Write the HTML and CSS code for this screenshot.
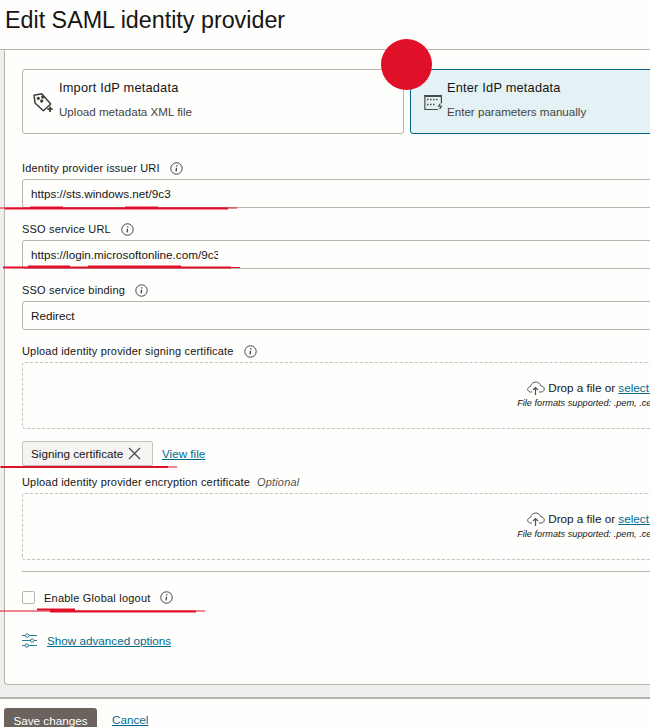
FILE: index.html
```html
<!DOCTYPE html>
<html lang="en">
<head>
<meta charset="utf-8">
<title>Edit SAML identity provider</title>
<link rel="stylesheet" href="styles.css">
</head>
<body>
<div class="page">
  <header class="header"><h1>Edit SAML identity provider</h1></header>
  <main class="main">
    <section class="card">
      <div class="tiles">
        <div class="tile">
          <svg class="tile-icon" width="24" height="24" viewBox="0 0 24 24" fill="none" stroke="#3f3d3a" stroke-width="1.500"><path d="M3 4.200 10.700 2.800 19.700 13 12.300 19.800 4 12Z" stroke-linejoin="round"/><circle cx="7.300" cy="7.300" r=".9"/><circle cx="11.700" cy="6" r=".9"/><circle cx="10.700" cy="10" r=".9"/><path d="M19 15.500v5.500M16.300 18.200h5.400" stroke-width="1.800"/></svg>
          <div><div class="tile-title">Import IdP metadata</div><div class="tile-sub">Upload metadata XML file</div></div>
        </div>
        <div class="tile selected">
          <svg class="tile-icon" width="24" height="24" viewBox="0 0 24 24" fill="none" stroke="#4a4845" stroke-width="1.200"><path d="M22.400 12V4.700H5.900v13.800h13"/><path d="M5.500 5h17.300" stroke-width="2"/><path d="M8 8.500h12M8 13.500h9" stroke-dasharray="1.500 1.500" stroke-width="1.400"/><path d="m21.500 12.500-2 2.800h3l-2 2.800" stroke-width="1.100"/></svg>
          <div><div class="tile-title">Enter IdP metadata</div><div class="tile-sub">Enter parameters manually</div></div>
        </div>
      </div>

      <div class="field first">
        <div class="label">Identity provider issuer URI<svg class="info" width="13" height="13" viewBox="0 0 13 13"><circle cx="6.500" cy="6.500" r="5.700" fill="none" stroke="#444"/><path d="M6.800 3.200v1.200M6.500 5.800l-.4 3.600" stroke="#444" stroke-width="1.300"/></svg></div>
        <div class="input"><span class="value">https://sts.windows.net/9c3</span></div>
      </div>
      <div class="field">
        <div class="label">SSO service URL<svg class="info" width="13" height="13" viewBox="0 0 13 13"><circle cx="6.500" cy="6.500" r="5.700" fill="none" stroke="#444"/><path d="M6.800 3.200v1.200M6.500 5.800l-.4 3.600" stroke="#444" stroke-width="1.300"/></svg></div>
        <div class="input"><span class="value clipped">https://login.microsoftonline.com/9c3</span></div>
      </div>
      <div class="field">
        <div class="label">SSO service binding<svg class="info" width="13" height="13" viewBox="0 0 13 13"><circle cx="6.500" cy="6.500" r="5.700" fill="none" stroke="#444"/><path d="M6.800 3.200v1.200M6.500 5.800l-.4 3.600" stroke="#444" stroke-width="1.300"/></svg></div>
        <div class="input"><span class="value">Redirect</span></div>
      </div>
      <div class="field">
        <div class="label">Upload identity provider signing certificate<svg class="info" width="13" height="13" viewBox="0 0 13 13"><circle cx="6.500" cy="6.500" r="5.700" fill="none" stroke="#444"/><path d="M6.800 3.200v1.200M6.500 5.800l-.4 3.600" stroke="#444" stroke-width="1.300"/></svg></div>
        <div class="drop">
          <div class="drop-line"><svg width="18" height="14" viewBox="0 0 18 14" fill="none" stroke="#555" stroke-width="1"><path d="M5 11H3.500C2 11 .7 9.800.7 8.300S2 5.600 3.500 5.500C4 2.800 6.200 1 8.800 1c2.400 0 4.400 1.600 5 3.800 1.900 0 3.500 1.500 3.500 3.200S15.700 11 14 11h-2"/><path d="M8.500 14V6.500M6 9l2.500-2.500L11 9" stroke-width="1.200"/></svg>Drop a file or <a href="#">select a file</a></div>
          <div class="drop-note">File formats supported: .pem, .cer, .crt, .der</div>
        </div>
      </div>
      <div class="chip-row">
        <span class="chip">Signing certificate<svg width="13" height="13" viewBox="0 0 13 13" stroke="#444" stroke-width="1.100"><path d="m1 1 11 11M12 1 1 12"/></svg></span>
        <a class="view" href="#">View file</a>
      </div>
      <div class="field enc">
        <div class="label">Upload identity provider encryption certificate<em>Optional</em></div>
        <div class="drop">
          <div class="drop-line"><svg width="18" height="14" viewBox="0 0 18 14" fill="none" stroke="#555" stroke-width="1"><path d="M5 11H3.500C2 11 .7 9.800.7 8.300S2 5.600 3.500 5.500C4 2.800 6.200 1 8.800 1c2.400 0 4.400 1.600 5 3.800 1.900 0 3.500 1.500 3.500 3.200S15.700 11 14 11h-2"/><path d="M8.500 14V6.500M6 9l2.500-2.500L11 9" stroke-width="1.200"/></svg>Drop a file or <a href="#">select a file</a></div>
          <div class="drop-note">File formats supported: .pem, .cer, .crt, .der</div>
        </div>
      </div>
      <hr class="rule">
      <label class="check"><span class="box"></span><span class="check-text">Enable Global logout</span><svg class="info" width="13" height="13" viewBox="0 0 13 13"><circle cx="6.500" cy="6.500" r="5.700" fill="none" stroke="#444"/><path d="M6.800 3.200v1.200M6.500 5.800l-.4 3.600" stroke="#444" stroke-width="1.300"/></svg></label>
      <div class="advanced">
        <svg width="15" height="15" viewBox="0 0 15 15" fill="none" stroke="#2a7a99"><path d="M0 2.500h3.500M7 2.500h8M0 7.500h8.500M12 7.500h3M0 12.500h3M6.500 12.500H15"/><circle cx="5.200" cy="2.500" r="1.700"/><circle cx="10.200" cy="7.500" r="1.700"/><circle cx="4.800" cy="12.500" r="1.700"/></svg>
        <a href="#">Show advanced options</a>
      </div>
    </section>
  </main>
  <footer class="footer">
    <button class="save" type="button">Save changes</button>
    <a href="#">Cancel</a>
  </footer>
</div>
<div class="dot"></div>
<svg class="marks" width="650" height="727" viewBox="0 0 650 727" fill="none" stroke="#e01028">
  <path d="M0 208h237" stroke-width="1"/><path d="M5 208.500h223M30 207.500h33M125 207.500h33" stroke-width="2"/>
  <path d="M3 267.500h237" stroke-width="1"/><path d="M3 267.500h228M28 266.500h42M88 266.500h93" stroke-width="2"/>
  <path d="M0 467h177" stroke-width="1"/><path d="M1 467h167" stroke-width="2"/>
  <path d="M0 611h205" stroke-width="1"/><path d="M37 609.500h38M50 611.500h146" stroke-width="2"/>
</svg>
</body>
</html>
```
FILE: styles.css
```css
* { box-sizing: border-box; }
html, body { margin: 0; height: 727px; overflow: hidden; background: #fefefd; }
body { font-family: "Liberation Sans", Arial, sans-serif; color: #161513; position: relative; }
a { color: #006b8f; text-decoration: underline; }
.page { height: 727px; display: flex; flex-direction: column; overflow: hidden; }
.header { height: 50px; flex: none; padding: 6px 0 0 5px; border-bottom: 1px solid #b8b5b0; }
h1 { margin: 0; font-size: 23.300px; line-height: 28px; font-weight: 400; }
.main { flex: 1; min-height: 0; background: #f1efed; padding: 0 0 13px 4px; overflow: hidden; }
.card { width: 1300px; height: 635px; background: #fefefd; border: 1px solid #b8b5b0; border-top: 0; border-radius: 0 0 4px 4px; padding: 19px 0 0 17px; }
.tiles { display: flex; gap: 6px; }
.tile { width: 382px; height: 65px; border: 1px solid #b8b5b0; border-radius: 3px; display: flex; gap: 4px; padding: 10px 0 0 8px; }
.tile.selected { background: #e4f1f5; border-color: #04628a; }
.tile-icon { margin-top: 11px; flex: none; }
.tile-title { font-size: 12.800px; line-height: 16px; letter-spacing: .2px; }
.tile-sub { font-size: 11.600px; line-height: 16px; margin-top: 8px; color: #45433f; }
.field { margin-top: 13px; }
.field.first { margin-top: 26px; }
.field.enc { margin-top: 8px; }
.label { font-size: 11px; line-height: 16px; letter-spacing: .18px; display: flex; align-items: center; white-space: pre; }
.label .info { margin-left: 10px; }
.check .info { margin-left: 9px; }
.label em { color: #55534f; margin-left: 7px; }
.input { width: 1240px; height: 29px; margin-top: 3px; border: 1px solid #b8b5b0; border-radius: 3px; padding: 6px 0 0 8px; font-size: 11.700px; line-height: 16px; }
.value { display: inline-block; white-space: nowrap; overflow: hidden; }
.value.clipped { max-width: 187px; }
.drop { width: 1240px; height: 67px; margin-top: 3px; border: 1px dashed #c4c1bc; border-radius: 3px; padding: 17px 80px 0 0; text-align: center; }
.drop-line { font-size: 11.700px; line-height: 16px; display: flex; justify-content: center; align-items: center; white-space: pre; }
.drop-line svg { margin-right: 3px; }
.drop-note { font-size: 9.200px; line-height: 11px; font-style: italic; margin: 2px 0 0 6px; }
.chip-row { display: flex; align-items: center; gap: 9px; margin-top: 12px; }
.chip { height: 25px; width: 131px; background: #f5f4f2; border: 1px solid #c4c1bc; border-radius: 2px; display: flex; align-items: center; gap: 5px; padding-left: 8px; font-size: 11.700px; }
.view { font-size: 11.700px; }
.rule { width: 1240px; margin: 11px 0 0; border: 0; border-top: 1px solid #b8b5b0; }
.check { display: flex; align-items: center; margin-top: 19px; font-size: 11px; letter-spacing: .22px; white-space: pre; }
.box { width: 13px; height: 13px; border: 1px solid #b8b5b0; border-radius: 2px; margin-right: 9px; }
.advanced { display: flex; align-items: center; gap: 10px; margin-top: 29px; font-size: 11.700px; }
.footer { flex: none; height: 30px; border-top: 2px solid #b8b5b0; display: flex; align-items: flex-start; gap: 15px; padding: 9px 0 0 4px; font-size: 11.700px; overflow: hidden; }
.save { height: 30px; width: 93px; border: 0; border-radius: 3px 3px 0 0; background: #6b635d; color: #fff; font: 11.700px "Liberation Sans", Arial, sans-serif; padding: 0 0 6px; }
.footer a { margin-top: 5px; }
.dot { position: absolute; left: 381px; top: 39px; width: 51px; height: 51px; border-radius: 50%; background: #e01028; }
.marks { position: absolute; left: 0; top: 0; pointer-events: none; }
```
